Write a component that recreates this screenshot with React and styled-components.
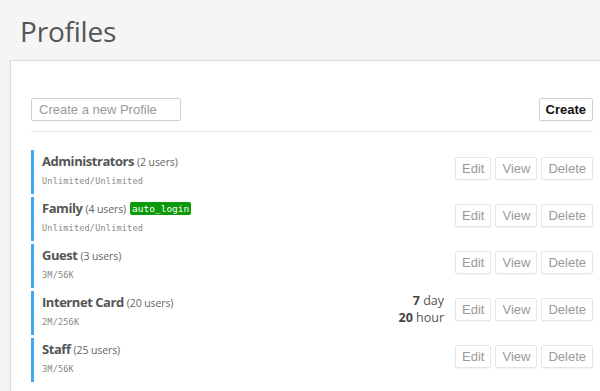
import React from "react";
import styled, { createGlobalStyle } from "styled-components";

const Global = createGlobalStyle`
  html, body { margin: 0; padding: 0; background: #f5f5f5; }
  body { font-family: "Open Sans", "Noto Sans", sans-serif; color: #444; }
`;

const Page = styled.div`
  width: 600px;
  height: 391px;
  overflow: hidden;
`;

const Title = styled.h1`
  margin: 0;
  padding: 13px 0 0 20px;
  height: 48px;
  box-sizing: border-box;
  font-family: "Open Sans", sans-serif;
  font-weight: 400;
  font-size: 28px;
  line-height: 36px;
  color: #555;
  letter-spacing: -0.2px;
`;

const Panel = styled.div`
  margin-left: 10px;
  margin-top: 12px;
  background: #fff;
  border-top: 1px solid #dcdcdc;
  border-left: 1px solid #dcdcdc;
  box-shadow: 0 0 2px rgba(0, 0, 0, 0.06);
  padding: 37px 7px 20px 20px;
  min-height: 340px;
`;

const CreateBar = styled.div`
  display: flex;
  justify-content: space-between;
  align-items: center;
  padding-bottom: 10px;
  border-bottom: 1px solid #e6e6e6;
  margin-bottom: 18px;
`;

const NameInput = styled.input`
  width: 150px;
  height: 23px;
  box-sizing: border-box;
  border: 1px solid #d0d0d0;
  border-radius: 2px;
  padding: 0 7px;
  font-family: "Liberation Sans", Arial, sans-serif;
  font-size: 13px;
  color: #444;
  outline: none;
  &::placeholder { color: #999; }
`;

const Button = styled.button`
  height: 23px;
  box-sizing: border-box;
  background: #fff;
  border: 1px solid ${(p) => (p.$primary ? "#d0d0d0" : "#e6e6e6")};
  border-radius: 2px;
  padding: 0 6px;
  font-family: "Liberation Sans", Arial, sans-serif;
  font-size: 13px;
  font-weight: ${(p) => (p.$primary ? 700 : 400)};
  color: ${(p) => (p.$primary ? "#111" : "#9a9a9a")};
  cursor: pointer;
  box-shadow: 0 1px 1px rgba(0, 0, 0, 0.04);
`;

const List = styled.div`
  display: flex;
  flex-direction: column;
  gap: 3px;
`;

const Row = styled.div`
  display: flex;
  align-items: flex-start;
  height: 44px;
  box-sizing: border-box;
  border-left: 3px solid #3fa9f0;
  padding-left: 8px;
`;

const Info = styled.div`
  flex: 1;
  display: flex;
  flex-direction: column;
  gap: 3px;
  padding-top: 2px;
`;

const NameLine = styled.div`
  display: flex;
  align-items: baseline;
  gap: 3px;
  height: 19px;
`;

const Name = styled.span`
  font-weight: 700;
  font-size: 13px;
  color: #555;
  letter-spacing: -0.45px;
`;

const Count = styled.span`
  font-size: 10.5px;
  color: #666;
  letter-spacing: -0.1px;
`;

const Badge = styled.span`
  align-self: center;
  background: #0a9a0a;
  color: #fff;
  font-family: "DejaVu Sans Mono", monospace;
  font-size: 9.5px;
  line-height: 13px;
  padding: 0 2px;
  border-radius: 2px;
  margin-left: 1px;
`;

const Limit = styled.div`
  font-family: "DejaVu Sans Mono", monospace;
  font-size: 8.5px;
  line-height: 14px;
  color: #888;
  letter-spacing: 0.2px;
`;

const Duration = styled.div`
  text-align: right;
  font-size: 12.5px;
  line-height: 17px;
  color: #555;
  margin-right: 11px;
  padding-top: 1px;
  b { font-weight: 700; color: #444; }
`;

const Actions = styled.div`
  display: flex;
  gap: 4px;
  margin-top: 7px;
`;

const profiles = [
  { name: "Administrators", users: 2, limit: "Unlimited/Unlimited" },
  { name: "Family", users: 4, limit: "Unlimited/Unlimited", badge: "auto_login" },
  { name: "Guest", users: 3, limit: "3M/56K" },
  { name: "Internet Card", users: 20, limit: "2M/256K", duration: [["7", "day"], ["20", "hour"]] },
  { name: "Staff", users: 25, limit: "3M/56K" },
];

export default function App() {
  return (
    <Page>
      <Global />
      <Title>Profiles</Title>
      <Panel>
        <CreateBar>
          <NameInput placeholder="Create a new Profile" />
          <Button $primary>Create</Button>
        </CreateBar>
        <List>
          {profiles.map((p) => (
            <Row key={p.name}>
              <Info>
                <NameLine>
                  <Name>{p.name}</Name>
                  <Count>({p.users} users)</Count>
                  {p.badge && <Badge>{p.badge}</Badge>}
                </NameLine>
                <Limit>{p.limit}</Limit>
              </Info>
              {p.duration && (
                <Duration>
                  {p.duration.map(([n, u]) => (
                    <div key={u}>
                      <b>{n}</b> {u}
                    </div>
                  ))}
                </Duration>
              )}
              <Actions>
                <Button>Edit</Button>
                <Button>View</Button>
                <Button>Delete</Button>
              </Actions>
            </Row>
          ))}
        </List>
      </Panel>
    </Page>
  );
}
